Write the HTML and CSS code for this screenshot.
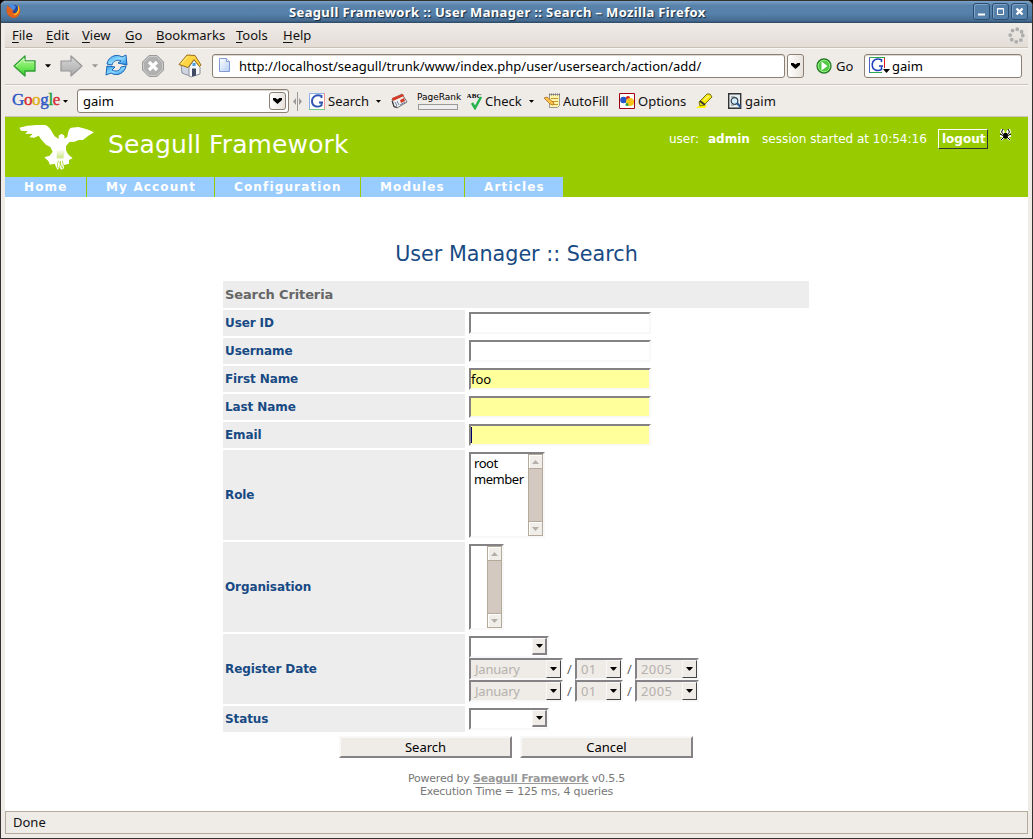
FILE: index.html
```html
<!DOCTYPE html>
<html lang="en">
<head>
<meta charset="utf-8">
<title>Seagull Framework :: User Manager :: Search</title>
<link rel="stylesheet" href="styles.css">
</head>
<body>
<svg class="defs" width="0" height="0">
  <defs>
    <linearGradient id="green" x2="0" y2="1"><stop offset="0" stop-color="#b5f59a"/><stop offset=".5" stop-color="#7cea62"/><stop offset="1" stop-color="#35cf2d"/></linearGradient>
    <linearGradient id="grey" x2="0" y2="1"><stop offset="0" stop-color="#d8d8d8"/><stop offset="1" stop-color="#a9a9a9"/></linearGradient>
    <linearGradient id="blue" x2="1" y2="1"><stop offset="0" stop-color="#2f9bf0"/><stop offset=".5" stop-color="#8fdcff"/><stop offset="1" stop-color="#2384e0"/></linearGradient>
    <linearGradient id="paper" x2="1" y2="1"><stop offset="0" stop-color="#fff"/><stop offset="1" stop-color="#b5cdf5"/></linearGradient>
    <linearGradient id="tail" x2="0" y2="1"><stop offset="0" stop-color="#9c0" stop-opacity="0"/><stop offset=".8" stop-color="#9c0" stop-opacity=".45"/><stop offset="1" stop-color="#9c0" stop-opacity=".1"/></linearGradient>
    <symbol id="caret" viewBox="0 0 7 4"><path d="M0 0h7L4 3.5H3z"/></symbol>
    <symbol id="chevron" viewBox="0 0 9 6"><path d="M0 0h2.500l2 1.600L6.500 0H9v2L4.500 6 0 2z"/></symbol>
  </defs>
</svg>
<div class="window">
  <header class="titlebar">
    <svg class="fox" width="15" height="15" viewBox="0 0 15 15"><circle cx="7" cy="7" r="6.500" fill="#24489c"/><path d="M3 1l4-1 3 3-2 3-4 0z" fill="#4b8ce0"/><path d="M1 3C-1 9 3 14 8 14c5-1 7-5 6-10-.5-1-1-2-2-3 1 4 0 7-3 8-3 0-3-2-1-3-2 0-3-1-3-2L3 3 1.500 1z" fill="#e4631a"/><path d="M12 1c1 5-1 9-5 10 4 1 7-3 6-8z" fill="#ffd12a"/></svg>
    <h1 class="caption">Seagull Framework :: User Manager :: Search – Mozilla Firefox</h1>
    <div class="controls">
      <svg width="17" height="17" viewBox="0 0 15 15"><path d="M4 10.500h7" stroke="#fff" stroke-width="2"/></svg>
      <svg width="17" height="17" viewBox="0 0 15 15"><path d="M4.500 4.500h6v6h-6zM4 5h7" fill="none" stroke="#fff"/></svg>
      <svg width="17" height="17" viewBox="0 0 15 15"><path d="M4.500 4.500l6 6M10.500 4.500l-6 6" stroke="#fff" stroke-width="2.300"/></svg>
    </div>
  </header>
  <div class="frame">
    <nav class="menubar">
      <span><u>F</u>ile</span><span><u>E</u>dit</span><span><u>V</u>iew</span><span><u>G</u>o</span><span><u>B</u>ookmarks</span><span><u>T</u>ools</span><span><u>H</u>elp</span>
      <svg class="throbber" width="17" height="17"><circle cx="8.500" cy="8.500" r="6.300" fill="none" stroke="#adadad" stroke-width="3.800" stroke-linecap="round" stroke-dasharray="0 4.948"/></svg>
    </nav>
    <div class="toolbar navigation">
      <svg width="23" height="22"><path d="M1 11L12 1v5h10v10H12v5z" fill="url(#green)" stroke="#2f9d32" stroke-linejoin="round" stroke-width="1.300"/><path d="M3 11l8-7.500V7h10" fill="none" stroke="#d6fac8"/></svg>
      <svg width="6" height="4"><use href="#caret"/></svg>
      <svg width="23" height="22"><path d="M22 11L11 1v5H1v10h10v5z" fill="url(#grey)" stroke="#979797" stroke-linejoin="round" stroke-width="1.200"/></svg>
      <svg width="6" height="4" fill="#999"><use href="#caret"/></svg>
      <svg width="24" height="23"><path d="M2 10C3 3 11-1 17 3l4-2 1 10-9-2 3-2c-4-2-8 0-9 4z" fill="url(#blue)" stroke="#1764b5"/><path d="M21 12c-1 7-9 11-15 7l-5 2 1-9 8 1-3 3c4 2 8 1 9-3z" fill="url(#blue)" stroke="#1764b5"/></svg>
      <svg width="22" height="22"><path d="M7 .5h8L21.500 7v8L15 21.500H7L.5 15V7z" fill="#b0b0b0" stroke="#9a9a9a"/><path d="M7.500 1.500h7l6 6v7l-6 6h-7l-6-6v-7z" fill="none" stroke="#ccc"/><path d="M7 7l8 8M15 7l-8 8" stroke="#fff" stroke-width="3.200"/></svg>
      <svg width="24" height="24"><path d="M3 10l6-5 3 6v11l-8-3z" fill="#cfd6e2" stroke="#8b909c"/><path d="M11 13l5-7 6 7v7l-9 3-2-1z" fill="#f7f8fa" stroke="#8b909c"/><path d="M14 14.500h4v7l-4 1z" fill="#3f4c64"/><path d="M14.500 9h3v3h-3z" fill="#419de8"/><path d="M1 10.500L9 1l8 .5 6 9.500-1.500 1.500L16 5.500l-6 8z" fill="#ffd544" stroke="#9b6b15"/><path d="M9.500 2.500L3 10" stroke="#fff7a0"/></svg>
      <div class="field url"><svg width="11" height="15"><path d="M.5.5h7l3 3v10h-10z" fill="url(#paper)" stroke="#829bd5"/><path d="M7.500.5v3h3" fill="#fff" stroke="#829bd5"/></svg><span>http://localhost/seagull/trunk/www/index.php/user/usersearch/action/add/</span></div>
      <div class="drop"><svg width="9" height="6"><use href="#chevron"/></svg></div>
      <svg width="16" height="16"><circle cx="8" cy="8" r="7" fill="#4fc844" stroke="#247a26" stroke-width="1.300"/><circle cx="8" cy="8" r="5.800" fill="none" stroke="#9aee82"/><path d="M5.500 3.500L11.500 8l-6 4.500z" fill="#fff"/></svg>
      <span>Go</span>
      <div class="field find">
        <svg width="22" height="17"><path d="M.5.5h15v15H.5z" fill="#fff"/><path d="M.5 16V.5H16" fill="none" stroke="#4a5ec4"/><path d="M1 .5h15M1 15.500h12" stroke="#2da94d"/><path d="M15.500 1v10" stroke="#e11b1b"/><path d="M12.500 5V2.800C7 .5 3 3.500 3.200 8.200 3.500 13 8 14.800 12.500 12.500V9M10 9h4" fill="none" stroke="#2040bb" stroke-width="1.500"/><path d="M14 12h7l-3.500 4z"/></svg><span>gaim</span>
      </div>
    </div>
    <div class="toolbar google">
      <span class="logo"><b>G</b><b>o</b><b>o</b><b>g</b><b>l</b><b>e</b></span>
      <svg width="5" height="3"><use href="#caret"/></svg>
      <div class="field query"><span>gaim</span><div class="drop"><svg width="9" height="6"><use href="#chevron"/></svg></div></div>
      <svg width="9" height="19" fill="#999"><path d="M4 0h1v19H4zM3 6v7L0 9.500zM6 6v7l3-3.500z"/></svg>
      <svg width="16" height="17"><path d="M.5.5h15v16H.5z" fill="#fff"/><path d="M.5 16V.5H15" fill="none" stroke="#8dafe8"/><path d="M15.500 0v16" stroke="#f19494"/><path d="M0 16.500h16" stroke="#73cc83"/><path d="M12.500 5V3C7 .8 2.800 4 3 8.500c.2 4.700 5 6.500 9.500 4V9.500M10 9.500h4" fill="none" stroke="#2f56b3" stroke-width="1.900"/></svg>
      <span>Search</span>
      <svg width="5" height="3"><use href="#caret"/></svg>
      <svg width="17" height="16"><path d="M1 6l10-5 5 8-10 6-3-2z" fill="#f3f3ef" stroke="#707070"/><path d="M1 5l11-4 1 2L2 8z" fill="#d63c28"/><path d="M9 7l4-2 1 3-4 2z" fill="#d63c28"/><path d="M4 9l2 4M9 12l5-3M6 8l2 4" stroke="#6d7da5"/><path d="M1 8l2 6h3" fill="none" stroke="#333"/></svg>
      <div class="pagerank"><span>PageRank</span><i></i></div>
      <svg class="spell" width="17" height="18"><text x="-.5" y="6" textLength="15">ABC</text><path d="M5 11l3 5 6-11" fill="none" stroke="#23b54b" stroke-width="2.500"/></svg>
      <span>Check</span>
      <svg width="5" height="3"><use href="#caret"/></svg>
      <svg width="17" height="16"><path d="M5.500 1.500h10v11l-2 2h-8z" fill="#fff3a8" stroke="#999"/><path d="M5 1.500h11" stroke="#777" stroke-width="2" stroke-dasharray="1 1"/><path d="M7 5.500h7M8 8.500h6M9 11.500h5" stroke="#c09a35"/><path d="M0 5l3-1 7 6-1 2-3-1z" fill="#ffc34a" stroke="#a65b18" stroke-width=".7"/></svg>
      <span>AutoFill</span>
      <svg width="16" height="16"><path d="M.5.500h15v15H.5z" fill="#fff" stroke="#a00010"/><circle cx="4.500" cy="7" r="3.300" fill="#2459c9"/><circle cx="9" cy="5" r="2" fill="#d42020"/><circle cx="11" cy="9" r="4" fill="#f9c41c"/><circle cx="8" cy="11.500" r="1.500" fill="#2ca442"/></svg>
      <span>Options</span>
      <svg width="17" height="16"><path d="M0 15h9l2-3H4z" fill="#fff600"/><path d="M3 9l8-8h3l2 3-8 8-4 1z" fill="#f6e811" stroke="#77710f"/><path d="M4 8l5 4" stroke="#333" stroke-width="1.800"/><path d="M8 7l5-4" stroke="#fffbb0"/></svg>
      <svg width="14" height="16"><path d="M.7.700h12v14.600H.7z" fill="#e6edf3" stroke="#333" stroke-width="1.400"/><path d="M3 4h4M3 12h3" stroke="#777"/><circle cx="6.500" cy="8" r="3.300" fill="#d3efff" stroke="#37404b" stroke-width="1.200"/><path d="M9 10l3.500 4" stroke="#28589a" stroke-width="2"/></svg>
      <span>gaim</span>
    </div>
    <main class="page">
      <div class="banner">
        <svg class="bird" width="76" height="46" viewBox="57 27 228 138"><path d="M58 38L82 32 110 30 135 30C148 32 155 50 164 64L176 72 176 62Q185 52 193 62L194 71 202 65C206 48 205 42 214 38L235 36C256 41 273 46 282 52L265 62 249 75 236 75 224 80 208 81 198 94 198 106 204 118 218 130 207 135 207 146 192 150 192 160 184 164 179 158 173 164 168 156 164 146 150 149 145 138 133 127 149 122 158 110 151 96 138 89 125 75 116 62 103 68 88 67 98 56 76 57 83 49 63 47Z" fill="#fff"/><path d="M170 103h24l-4 30H170z" fill="url(#tail)"/><path d="M175 137q-7 24 3 23 3-7 3-22 1 17 6 22 6-9 0-23" fill="none" stroke="#9c0" stroke-width="2"/></svg>
        <h2>Seagull Framework</h2>
        <div class="session"><span>user:</span><b>admin</b><span>session started at 10:54:16</span><a class="logout">logout</a>
          <svg width="11" height="12"><path d="M4 6L1 3 2 0M7 6l3-3-1-3M4 7H0M7 7h4M4 8l-3 3M7 8l3 3M4 4L3 1M7 4l1-3" fill="none" stroke="#fff" stroke-width="2"/><path d="M4 6L1.500 3 3 0M7 6l2.500-3L8 0M4 7L0 5M7 7l4-2M4 8l-3 3M7 8l3 3" fill="none" stroke="#000"/><circle cx="5.500" cy="7.500" r="2.300"/><path d="M4 4h3v2H4z"/></svg>
        </div>
      </div>
      <nav class="tabs"><a>Home</a><a>My Account</a><a>Configuration</a><a>Modules</a><a>Articles</a></nav>
      <h3>User Manager :: Search</h3>
      <form class="form">
        <div class="section">Search Criteria</div>
        <label>User ID</label><div class="cell"><div class="input"></div></div>
        <label>Username</label><div class="cell"><div class="input"></div></div>
        <label>First Name</label><div class="cell"><div class="input filled">foo</div></div>
        <label>Last Name</label><div class="cell"><div class="input filled"></div></div>
        <label>Email</label><div class="cell"><div class="input filled"><i class="cursor"></i></div></div>
        <label>Role</label><div class="cell"><div class="list role"><div class="options"><span>root</span><span>member</span></div><div class="scroll"><i><svg width="7" height="4"><path d="M3.500 0L7 4H0z" fill="#b5b0a7"/></svg></i><i><svg width="7" height="4"><path d="M0 0h7L3.500 4z" fill="#b5b0a7"/></svg></i></div></div></div>
        <label>Organisation</label><div class="cell"><div class="list org"><div class="options"></div><div class="scroll"><i><svg width="7" height="4"><path d="M3.500 0L7 4H0z" fill="#b5b0a7"/></svg></i><i><svg width="7" height="4"><path d="M0 0h7L3.500 4z" fill="#b5b0a7"/></svg></i></div></div></div>
        <label>Register Date</label>
        <div class="cell">
          <div class="select"><span></span><i><svg width="7" height="4"><use href="#caret"/></svg></i></div>
          <div class="dates"><div class="select off month"><span>January</span><i><svg width="7" height="4"><use href="#caret"/></svg></i></div><em>/</em><div class="select off day"><span>01</span><i><svg width="7" height="4"><use href="#caret"/></svg></i></div><em>/</em><div class="select off year"><span>2005</span><i><svg width="7" height="4"><use href="#caret"/></svg></i></div></div>
          <div class="dates"><div class="select off month"><span>January</span><i><svg width="7" height="4"><use href="#caret"/></svg></i></div><em>/</em><div class="select off day"><span>01</span><i><svg width="7" height="4"><use href="#caret"/></svg></i></div><em>/</em><div class="select off year"><span>2005</span><i><svg width="7" height="4"><use href="#caret"/></svg></i></div></div>
        </div>
        <label>Status</label><div class="cell"><div class="select"><span></span><i><svg width="7" height="4"><use href="#caret"/></svg></i></div></div>
      </form>
      <div class="actions"><div class="button">Search</div><div class="button">Cancel</div></div>
      <footer>Powered by <b>Seagull Framework</b> v0.5.5<br>Execution Time = 125 ms, 4 queries</footer>
    </main>
    <div class="status">Done</div>
  </div>
</div>
</body>
</html>
```
FILE: styles.css
```css
* { box-sizing: border-box; }
body { margin: 0; width: 1033px; height: 839px; overflow: hidden; background: #000; font: 13px/16px "Noto Sans", sans-serif; color: #111; }
svg { display: block; }
h1, h2, h3 { margin: 0; font-weight: normal; }
i, em { font-style: normal; }
.defs { position: absolute; }
.window { height: 839px; border: 1px solid #35312f; border-radius: 6px 6px 0 0; overflow: hidden; background: #efebe7; }
.titlebar { height: 22px; display: grid; grid-template-columns: 28px 1fr 55px; align-items: center; padding: 0 4px 0 5px; background: linear-gradient(#7ba2c7, #5983ab 20%, #5480aa 60%, #466a8f 90%, #29445f); }
.fox { margin-top: -2px; }
.caption { padding-left: 255px; font-size: 13px; font-weight: bold; letter-spacing: .36px; line-height: 20px; white-space: nowrap; color: #fff; text-shadow: 1px 1px 1px #14283e; }
.controls { display: flex; gap: 2px; padding-bottom: 1px; }
.controls svg { border: 1px solid #2a4c70; border-radius: 3px; box-shadow: inset 1px 1px #7fa3c6; background: #5580aa; overflow: hidden; }
.frame { padding: 0 4px; }
.menubar { height: 25px; display: grid; grid-template-columns: 34px 36px 43px 31px 80px 47px 1fr 17px; align-items: center; padding: 0 3px 0 7px; border-bottom: 1px solid #c9c0b6; background: linear-gradient(#efebe7, #e3ddd7); }
.menubar u { text-underline-offset: 2px; }
.toolbar { display: grid; align-items: center; white-space: nowrap; border-bottom: 1px solid #cdc4bb; }
.navigation { height: 37px; border-top: 1px solid #faf8f6; grid-template-columns: 32px 15px 32px 13px 37px 36px 34px 575px 29px 20px 28px 158px; padding: 0 0 2px 8px; }
.google { height: 32px; border-top: 1px solid #faf8f6; grid-template-columns: 51px 14px 216px 16px 19px 48px 15px 26px 50px 18px 44px 15px 19px 56px 19px 58px 32px 17px 40px; padding-left: 7px; }
.field { display: flex; align-items: center; height: 24px; border: 1px solid #8c7f73; border-radius: 3px; background: #fff; box-shadow: inset 0 1px #ddd8d3; color: #000; }
.drop { width: 17px; height: 24px; display: flex; align-items: center; justify-content: center; border: 1px solid #8c7f73; border-radius: 3px; background: linear-gradient(90deg, #fff, #e8e2dc); }
.url { width: 573px; padding-left: 6px; gap: 9px; letter-spacing: .03px; }
.find { padding-left: 4px; gap: 1px; }
.query { width: 212px; padding: 0 2px 0 5px; justify-content: space-between; }
.query .drop { height: 18px; }
.logo { font: 17px/20px "Liberation Serif", serif; letter-spacing: -.35px; padding-bottom: 2px; }
.logo b { font-weight: normal; -webkit-text-stroke: .4px; color: #2b56c4; }
.logo b:nth-child(2), .logo b:nth-child(6) { color: #d62d32; }
.logo b:nth-child(3) { color: #dfac16; }
.logo b:nth-child(5) { color: #209c3c; }
.pagerank { font: 9px/9px "DejaVu Sans", sans-serif; color: #000; }
.pagerank i { display: block; width: 40px; height: 6px; margin: 2px 0 0 1px; border: 1px solid #999; background: #eee; }
.spell text { font: bold 7px "Liberation Serif", serif; }
.page { height: 694px; background: #fff; font-family: "DejaVu Sans", sans-serif; }
.banner { height: 60px; display: grid; grid-template-columns: 103px 556px 1fr; background: #9c0; color: #fff; }
.bird { margin: 7px 0 0 14px; }
.banner h2 { font-size: 25px; letter-spacing: .12px; line-height: 30px; margin-top: 13px; }
.session { display: grid; grid-template-columns: 39px 54px 176px 62px 11px; margin: 12px 0 0 5px; font-size: 12px; line-height: 20px; white-space: nowrap; height: 20px; }
.logout { width: 50px; border: 1px solid #fff; border-right-color: #333; border-bottom-color: #333; padding-left: 3px; font-weight: bold; line-height: 18px; }
.tabs { display: flex; gap: 1px; height: 20px; background: #9c0; color: #fff; font-size: 12px; font-weight: bold; line-height: 21px; letter-spacing: 1.150px; }
.tabs a { width: 81px; padding-left: 19px; background: #9cf; }
.tabs a:nth-child(2) { width: 127px; }
.tabs a:nth-child(3) { width: 145px; }
.tabs a:nth-child(4) { width: 103px; }
.tabs a:nth-child(5) { width: 98px; }
.page h3 { margin-top: 42px; text-align: center; font-size: 20.700px; line-height: 30px; color: #184a84; }
.form { display: grid; grid-template-columns: 242px 342px; grid-template-rows: 27px repeat(5, 26px) 90px 90px 70px 26px; gap: 2px; margin: 12px 0 0 218px; }
.section { grid-column: 1 / 3; padding-left: 2px; background: #ededed; color: #666; font-weight: bold; line-height: 27px; letter-spacing: -.12px; }
.form label { display: flex; align-items: center; padding-left: 2px; background: #ededed; color: #184a84; font-size: 12px; font-weight: bold; letter-spacing: -.1px; }
.cell { padding: 2px; font-family: "Noto Sans", sans-serif; color: #000; }
.input, .list, .select { border: 2px solid #848284; border-right-color: #f8f8f8; border-bottom-color: #f8f8f8; background: #fff; }
.input { width: 182px; height: 22px; line-height: 19px; }
.filled { background: #ffff9c; }
.cursor { display: block; width: 1px; height: 16px; margin-top: 1px; background: #006; }
.list { display: flex; width: 76px; height: 86px; }
.org { width: 35px; }
.options { flex: 1; padding: 1px 0 0 3px; letter-spacing: -.45px; }
.options span { display: block; }
.scroll { width: 15px; margin-right: 0; display: flex; flex-direction: column; justify-content: space-between; border: 1px solid #b5a99a; background: #d3c9c1; }
.scroll i { height: 14px; display: flex; align-items: center; justify-content: center; background: #f1eeea; border-bottom: 1px solid #b5a99a; box-shadow: inset 1px 1px #fff; }
.scroll i:last-child { border-top: 1px solid #b5a99a; border-bottom: 0; }
.select { display: flex; justify-content: space-between; width: 80px; height: 22px; line-height: 19px; }
.select span { padding-left: 4px; letter-spacing: -.2px; }
.select i { width: 15px; height: 17px; display: flex; align-items: center; justify-content: center; background: #efebe7; border: 1px solid #f8f8f8; border-right: 2px solid #848284; border-bottom: 2px solid #848284; }
.select .off i, .off i { height: 18px; border-right: 1px solid #444; border-bottom: 1px solid #444; }
.off { background: #efebe7; color: #b5b2ac; }
.dates { display: flex; height: 22px; }
.dates em { width: 12px; padding-left: 4px; line-height: 23px; color: #666; }
.month { width: 94px; }
.day { width: 48px; }
.day span, .year span { letter-spacing: .4px; }
.year { width: 64px; }
.actions { display: flex; gap: 8px; margin: 4px 0 0 334px; }
.button { width: 173px; height: 22px; border: 2px solid #848284; border-top-color: #f8f8f8; border-left-color: #f8f8f8; background: #efebe7; text-align: center; line-height: 18px; font-family: "Noto Sans", sans-serif; color: #000; }
footer { margin-top: 14px; text-align: center; font-size: 11px; letter-spacing: -.2px; line-height: 13px; color: #777; }
footer b { color: #999; text-decoration: underline; }
.status { height: 23px; padding: 2px 7px; border: 1px solid #b5ab9c; }
```
